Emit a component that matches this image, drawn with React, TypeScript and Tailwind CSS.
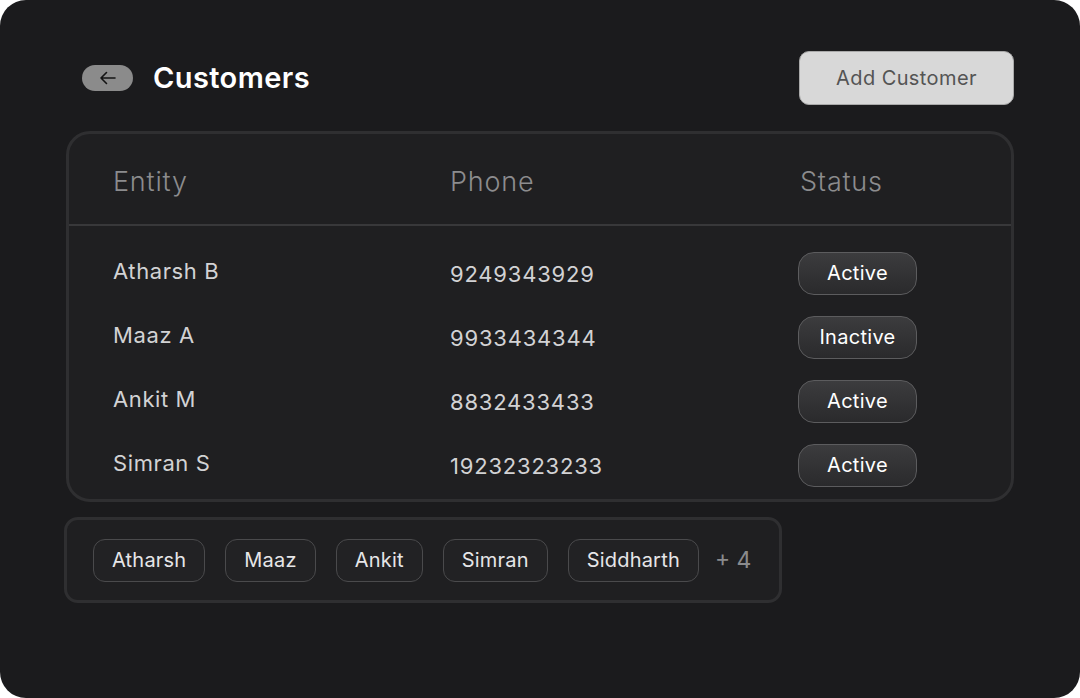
import React from 'react';

interface Customer {
  name: string;
  phone: string;
  status: 'Active' | 'Inactive';
}

const customers: Customer[] = [
  { name: 'Atharsh B', phone: '9249343929', status: 'Active' },
  { name: 'Maaz A', phone: '9933434344', status: 'Inactive' },
  { name: 'Ankit M', phone: '8832433433', status: 'Active' },
  { name: 'Simran S', phone: '19232323233', status: 'Active' },
];

const tags = ['Atharsh', 'Maaz', 'Ankit', 'Simran', 'Siddharth'];

export default function App() {
  return (
    <div className="w-full h-[698px] bg-white" style={{ fontFamily: 'Inter, "Noto Sans", sans-serif' }}>
      <div className="h-full rounded-[26px] bg-[#1b1b1d] pl-[64px] pr-[66px] pt-[51px]">
        {/* Header */}
        <div className="flex items-center justify-between pl-[18px]">
          <div className="flex items-center gap-5">
            <button className="w-[51px] h-[26px] rounded-full bg-[#8b8b8b] flex items-center justify-center">
              <svg width="18" height="14" viewBox="0 0 18 14" fill="none">
                <path d="M16 7H2M7.5 1.5L2 7l5.5 5.5" stroke="#141414" strokeWidth="1.6" strokeLinecap="round" strokeLinejoin="round" />
              </svg>
            </button>
            <h1 className="text-[29px] font-semibold text-white tracking-[0.4px]">Customers</h1>
          </div>
          <button className="w-[215px] h-[54px] rounded-[10px] bg-[#d8d8d8] border border-[#a9a9a9] text-[20px] tracking-[0.4px] text-[#545454]">
            Add Customer
          </button>
        </div>

        {/* Table */}
        <div className="mt-[26px] ml-[2px] rounded-[24px] border-[3px] border-[#2f2f31] bg-[#1f1f21] overflow-hidden">
          <div className="grid grid-cols-[337px_350px_1fr] items-center h-[92px] pl-[44px] border-b-2 border-[#38383a] text-[27px] font-light tracking-[0.8px] text-[#8c8c8e]">
            <div className="pt-[6px]">Entity</div>
            <div className="pt-[6px]">Phone</div>
            <div className="pt-[6px]">Status</div>
          </div>
          <div className="pt-[15px] pb-[2px]">
            {customers.map((c) => (
              <div key={c.name} className="grid grid-cols-[337px_348px_1fr] items-center h-16 pl-[44px] text-[22px] tracking-[0.6px] text-[#d2d2d4]">
                <div className="-mt-1">{c.name}</div>
                <div className="pt-[2px] tracking-[0.8px]">{c.phone}</div>
                <div>
                  <span className="inline-flex items-center justify-center w-[119px] h-[43px] rounded-[16px] border border-[#5c5c5e] bg-gradient-to-b from-[#3c3c3e] to-[#2a2a2c] text-[20px] tracking-[0.3px] text-white">
                    {c.status}
                  </span>
                </div>
              </div>
            ))}
          </div>
        </div>

        {/* Tags */}
        <div className="mt-[15px] w-[718px] h-[86px] rounded-[14px] border-[3px] border-[#2f2f31] bg-[#1f1f21] flex items-center gap-5 pl-[26px]">
          {tags.map((t) => (
            <span key={t} className="h-[43px] px-[18px] rounded-[12px] border border-[#4a4a4c] bg-[#222224] flex items-center text-[20px] tracking-[0.2px] text-[#e6e6e8]">
              {t}
            </span>
          ))}
          <span className="text-[23px] text-[#8a8a8c] -ml-1">+ 4</span>
        </div>
      </div>
    </div>
  );
}
